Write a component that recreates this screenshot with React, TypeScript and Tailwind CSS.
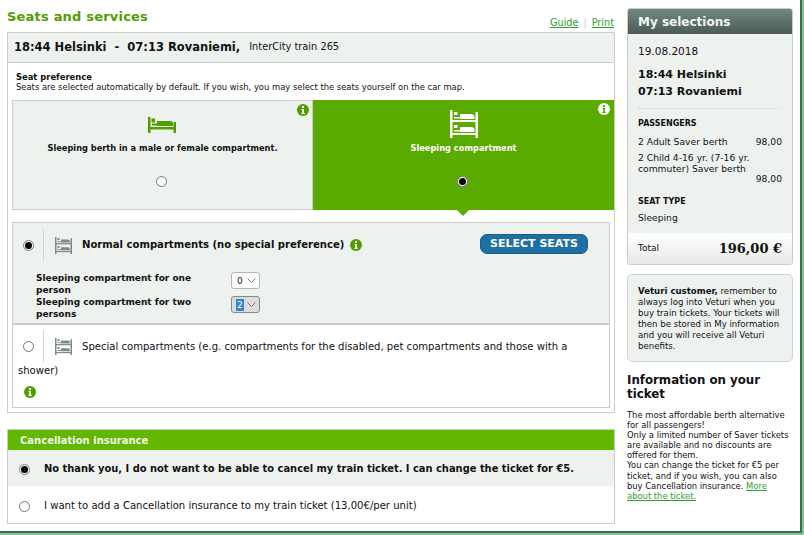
import React from "react";

const font = "font-['DejaVu_Sans','Liberation_Sans',sans-serif]";
const narrow = "font-['DejaVu_Sans_Condensed','DejaVu_Sans',sans-serif]";

function Info({ light = false }: { light?: boolean }) {
  return (
    <svg width="12" height="12" viewBox="0 0 12 12" className="shrink-0">
      <circle cx="6" cy="6" r="6" fill={light ? "#ffffff" : "#4f9e00"} />
      <rect x="5" y="2" width="2" height="2" fill={light ? "#5aaa00" : "#ffffff"} />
      <path d="M4.400 5h2.600v4h.8v1H4.400V9h.8V6h-.8z" fill={light ? "#5aaa00" : "#ffffff"} />
    </svg>
  );
}

function Radio({ checked = false }: { checked?: boolean }) {
  return (
    <span className="flex h-[11px] w-[11px] shrink-0 items-center justify-center rounded-full border border-[#777] bg-white">
      {checked && <span className="h-[7px] w-[7px] rounded-full bg-black" />}
    </span>
  );
}

function SingleBed() {
  return (
    <svg width="28" height="16" viewBox="0 0 28 16" fill="#4f9e00">
      <rect x="0" y="0" width="2.500" height="16" />
      <rect x="25.500" y="5" width="2.500" height="11" />
      <rect x="0" y="10" width="28" height="2.500" />
      <rect x="3.500" y="1.500" width="3.500" height="4" />
      <rect x="4" y="6.500" width="6" height="2" />
      <path d="M9 4h13q3 0 3 3v2H9z" />
    </svg>
  );
}

function BunkBed({ color, w = 28, h = 28 }: { color: string; w?: number; h?: number }) {
  return (
    <svg width={w} height={h} viewBox="0 0 28 28" fill={color}>
      <rect x="0" y="0" width="2.500" height="28" />
      <rect x="25.500" y="2" width="2.500" height="26" />
      <rect x="0" y="10" width="28" height="2" />
      <rect x="0" y="23" width="28" height="2" />
      <rect x="4" y="2" width="3.500" height="3" />
      <rect x="4" y="7" width="6" height="1.500" />
      <path d="M10 4h11q3.500 0 3.500 3v2H10z" />
      <rect x="4" y="15" width="3.500" height="3" />
      <rect x="4" y="20" width="6" height="1.500" />
      <path d="M10 17h11q3.500 0 3.500 3v2H10z" />
    </svg>
  );
}

function Divider() {
  return <span className="block h-[32px] w-px shrink-0 bg-[#cfd4cf]" />;
}

function Select({ value, active = false }: { value: string; active?: boolean }) {
  return (
    <div className={`flex h-[17px] w-[29px] items-center gap-[3px] rounded-[3px] border pl-[4px] text-[9px] ${active ? "border-[#888] bg-[#dcdcdc]" : "border-[#b5b5b5] bg-white"}`}>
      <span className={active ? "bg-[#2f86d8] px-[1px] text-white" : "px-[1px]"}>{value}</span>
      <svg width="9" height="5" viewBox="0 0 9 5" fill="none" stroke="#777">
        <path d="M.5.500 4.500 4.500 8.500.500" />
      </svg>
    </div>
  );
}

export default function App() {
  return (
    <div className={`${font} h-[535px] w-[804px] overflow-hidden bg-[#7fc79a] text-[#111]`}>
      <div className="flex h-[533px] w-[802px] gap-[12px] overflow-hidden border-b-2 border-r-2 border-[#3f6b52] bg-white pl-[7px]">
        {/* left column */}
        <div className="w-[608px] shrink-0">
          <div className="flex h-[32px] items-end justify-between pb-[2px]">
            <h1 className="mb-[5px] text-[13px] font-bold leading-[16px] tracking-[0.2px] text-[#4f9e00]">Seats and services</h1>
            <div className="mr-[1px] flex items-center gap-[5px] text-[9.700px] leading-[14px] text-[#2f9e2f]">
              <span className="underline">Guide</span>
              <span className="text-[#ccc]">|</span>
              <span className="underline">Print</span>
            </div>
          </div>

          <div className="border border-[#ccc] pb-[4px]">
            <div className="flex h-[30px] items-center border-b border-[#ccc] bg-[#eef2ee] pl-[6px] text-[11.500px] font-bold">
              <span className="whitespace-pre">18:44 Helsinki  -  07:13 Rovaniemi, </span>
              <span className={`${narrow} ml-[5px] text-[10.900px] font-normal`}>InterCity train 265</span>
            </div>

            <div className="px-[8px] pt-[9px] text-[8.400px] leading-[10px]">
              <div className="font-bold">Seat preference</div>
              <div>Seats are selected automatically by default. If you wish, you may select the seats yourself on the car map.</div>
            </div>

            <div className="ml-[4px] mt-[8px] flex h-[110px]">
              <div className="relative flex w-[301px] flex-col items-center border border-[#ccc] bg-[#eef2ee] pt-[16px]">
                <div className="absolute right-[3px] top-[3px]"><Info /></div>
                <div className="mr-[2px]"><SingleBed /></div>
                <div className="mt-[9px] text-[8.250px] font-bold leading-[12px]">Sleeping berth in a male or female compartment.</div>
                <div className="mr-[2px] mt-[22px]"><Radio /></div>
              </div>
              <div className="relative flex w-[301px] flex-col items-center bg-[#5aaa00] pt-[10px] text-white">
                <div className="absolute right-[4px] top-[3px]"><Info light /></div>
                <BunkBed color="#ffffff" />
                <div className="mt-[4px] text-[8.250px] font-bold leading-[12px]">Sleeping compartment</div>
                <div className="mr-[2px] mt-[22px]"><Radio checked /></div>
                <span className="absolute bottom-[-6px] left-[144px] h-0 w-0 border-x-[6px] border-t-[6px] border-x-transparent border-t-[#5aaa00]" />
              </div>
            </div>

            <div className="ml-[4px] mr-[4px] mt-[12px] border border-[#ccc]">
              <div className="relative h-[102px] border-b-2 border-[#ccc] bg-[#eef2ee]">
                <div className="flex h-[44px] items-center pl-[10px]">
                  <Radio checked />
                  <span className="ml-[9px]"><Divider /></span>
                  <span className="ml-[11px]"><BunkBed color="#7d8a85" w={17} h={17} /></span>
                  <span className={`${narrow} ml-[10px] text-[11.200px] font-bold`}>Normal compartments (no special preference)</span>
                  <span className="ml-[6px]"><Info /></span>
                </div>
                <div className="absolute right-[21px] top-[11px] flex h-[20px] w-[108px] items-center justify-center rounded-[7px] border border-[#15608f] bg-[#1f6fa3] text-[11px] font-bold text-white">
                  SELECT SEATS
                </div>
                <div className="flex pl-[23px] pt-[5px] text-[9px] font-bold leading-[12px]">
                  <div className="mr-[35px] w-[160px]">
                    <div>Sleeping compartment for one person</div>
                    <div>Sleeping compartment for two persons</div>
                  </div>
                  <div className="flex flex-col gap-[7px] font-normal">
                    <Select value="0" />
                    <Select value="2" active />
                  </div>
                </div>
              </div>
              <div className={`${narrow} h-[82px] pl-[5px] pt-[5px] text-[11.200px] leading-[24px]`}>
                <div className="flex h-[32px] items-center pl-[5px]">
                  <Radio />
                  <span className="ml-[9px]"><Divider /></span>
                  <span className="ml-[11px]"><BunkBed color="#7d8a85" w={17} h={17} /></span>
                  <span className="ml-[10px] whitespace-nowrap pt-[2px]">Special compartments (e.g. compartments for the disabled, pet compartments and those with a</span>
                </div>
                <div className="mt-[-3px]">shower)</div>
                <div className="ml-[6px] mt-[3px]"><Info /></div>
              </div>
            </div>
          </div>

          <div className="mt-[16px] border border-[#ccc]">
            <div className="flex h-[20px] items-center bg-[#62b800] pl-[12px] text-[10px] font-bold text-[#f2f7ea]">Cancellation insurance</div>
            <div className={`${narrow} flex h-[36px] items-center bg-[#eef2ee] pl-[11px] pt-[2px] text-[11px] font-bold`}>
              <Radio checked />
              <span className="ml-[14px]">No thank you, I do not want to be able to cancel my train ticket. I can change the ticket for €5.</span>
            </div>
            <div className={`${narrow} flex h-[37px] items-center pl-[11px] pt-[3px] text-[11.200px]`}>
              <Radio />
              <span className="ml-[14px]">I want to add a Cancellation insurance to my train ticket (13,00€/per unit)</span>
            </div>
          </div>
        </div>

        {/* right column */}
        <div className="w-[166px] shrink-0 pt-[8px]">
          <div className="overflow-hidden rounded-[3px] border border-[#ccc] bg-[#eef2ee]">
            <div className="flex h-[25px] items-center bg-gradient-to-b from-[#6f8880] to-[#4c5c57] pl-[10px] text-[12px] font-bold text-[#f4f6f4]">My selections</div>
            <div className="px-[10px] pt-[10px]">
              <div className="text-[10.500px] leading-[14px]">19.08.2018</div>
              <div className="mt-[8px] text-[11px] font-bold leading-[17px]">
                <div>18:44 Helsinki</div>
                <div>07:13 Rovaniemi</div>
              </div>
              <div className="mt-[8px] border-t border-dotted border-[#d5d9d5] pt-[9px] text-[8px] font-bold leading-[12px]">PASSENGERS</div>
              <div className="mt-[6px] flex justify-between text-[9.200px] leading-[12px]">
                <span>2 Adult Saver berth</span>
                <span>98,00</span>
              </div>
              <div className="mt-[4px] text-[9.200px] leading-[11px]">2 Child 4-16 yr. (7-16 yr. commuter) Saver berth</div>
              <div className="mt-[-1px] text-right text-[9.200px] leading-[12px]">98,00</div>
              <div className="mt-[11px] text-[8px] font-bold leading-[12px]">SEAT TYPE</div>
              <div className="mt-[4px] text-[9.200px] leading-[12px]">Sleeping</div>
            </div>
            <div className="mt-[9px] flex h-[31px] items-center justify-between bg-gradient-to-b from-white to-[#e6e9e6] px-[10px]">
              <span className="text-[9px]">Total</span>
              <span className="font-['DejaVu_Serif',serif] text-[13px] font-bold">196,00 €</span>
            </div>
          </div>

          <div className="mt-[9px] rounded-[5px] border border-[#d0d5d0] bg-[#eef2ee] pb-[9px] pl-[10px] pr-[6px] pt-[11px] text-[8.600px] leading-[11px]">
            <b>Veturi customer,</b> remember to always log into Veturi when you buy train tickets. Your tickets will then be stored in My information and you will receive all Veturi benefits.
          </div>

          <h2 className="mt-[11px] text-[11.800px] font-bold leading-[14px]">Information on your ticket</h2>
          <p className="mt-[9px] text-[8.400px] leading-[10.100px]">
            The most affordable berth alternative for all passengers!
            <br />
            Only a limited number of Saver tickets are available and no discounts are offered for them.
            <br />
            You can change the ticket for €5 per ticket, and if you wish, you can also buy Cancellation insurance. <span className="text-[#2f9e2f] underline">More about the ticket.</span>
          </p>
        </div>
      </div>
    </div>
  );
}
